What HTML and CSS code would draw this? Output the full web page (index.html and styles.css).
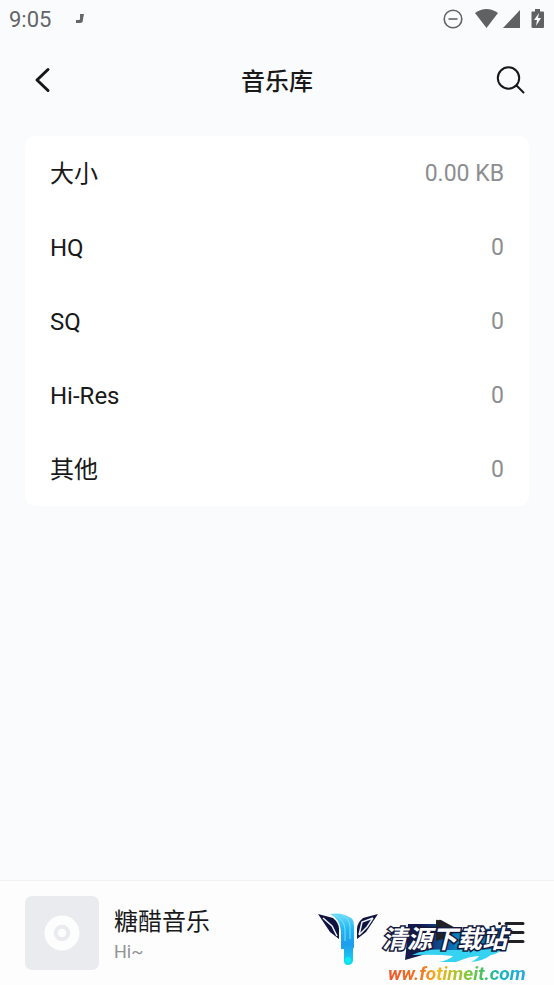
FILE: index.html
```html
<!DOCTYPE html>
<html lang="zh-CN">
<head>
<meta charset="utf-8">
<meta name="viewport" content="width=device-width, initial-scale=1">
<title>音乐库</title>
<link rel="stylesheet" href="styles.css">
</head>
<body>
<div class="status">
  <time class="clock">9:05</time>
  <svg class="note" width="10" height="12" viewBox="0 0 10 12"><path d="M5 1h4l-1 5c0 3-1 4-3 4H1V7h3c1 0 1-1 1-2z" fill="#66676a"/></svg>
  <svg class="signals" width="104" height="22" viewBox="0 0 104 22">
    <g fill="none" stroke="#626366" stroke-width="1.6"><circle cx="11" cy="11" r="8.800"/><path d="M6.500 11h9"/></g>
    <path d="M33 5Q44.500-3 56 5L44.500 20z" fill="#606163"/>
    <path d="M78 2v18H61z" fill="#606163"/>
    <path d="M90 3.500h3V1h5v2.500h3q1 0 1 1v14q0 1.500-1 1.500H91q-1.500 0-1.500-1.500V4z" fill="#606163"/>
    <path d="M97 5l-5 7h3l-1 6 5-8h-3z" fill="#fafbfd"/>
  </svg>
</div>
<header class="bar">
  <button class="icon" type="button" aria-label="返回"><svg width="36" height="36" viewBox="0 0 36 36"><path d="M23 7.500 12 18l11 10.500" fill="none" stroke="#171717" stroke-width="3" stroke-linecap="round" stroke-linejoin="round"/></svg></button>
  <h1>音乐库</h1>
  <button class="icon" type="button" aria-label="搜索"><svg width="36" height="36" viewBox="0 0 36 36"><g fill="none" stroke="#171717" stroke-width="2" stroke-linecap="round"><circle cx="15.500" cy="16" r="10.700"/><path d="m23.500 23.500 7 7"/></g></svg></button>
</header>
<main>
  <dl class="card">
    <div class="row"><dt>大小</dt><dd>0.00 KB</dd></div>
    <div class="row"><dt>HQ</dt><dd>0</dd></div>
    <div class="row"><dt>SQ</dt><dd>0</dd></div>
    <div class="row"><dt>Hi-Res</dt><dd>0</dd></div>
    <div class="row"><dt>其他</dt><dd>0</dd></div>
  </dl>
</main>
<footer class="player">
  <svg class="cover" width="74" height="74" viewBox="0 0 74 74"><rect width="74" height="74" rx="7" fill="#e9ebee"/><circle cx="37" cy="37" r="17.500" fill="#fdfdfe"/><circle cx="37" cy="37" r="6.300" fill="none" stroke="#e9ebee" stroke-width="4"/></svg>
  <div class="track"><strong>糖醋音乐</strong><span>Hi~</span></div>
  <button class="icon" type="button" aria-label="播放"><svg width="36" height="36" viewBox="0 0 36 36"><path d="M5 7q0-3 3-2l20 11q3 2 0 4L8 31q-3 1-3-2z" fill="#202124"/></svg></button>
  <button class="icon" type="button" aria-label="播放列表"><svg width="36" height="36" viewBox="0 0 36 36"><g stroke="#202124" stroke-width="3" stroke-linecap="round"><path d="M13 8.500h17M13 17.500h17M13 26.500h17M6.500 8.500h.1M6.500 17.500h.1M6.500 26.500h.1"/></g></svg></button>
  <div class="watermark">
    <svg class="emblem" width="60" height="56" viewBox="0 0 60 56">
      <defs><linearGradient id="flow" x1="0" y1="0" x2="0" y2="1"><stop offset="0" stop-color="#6fdcf8"/><stop offset=".3" stop-color="#22b8f2"/><stop offset=".6" stop-color="#1e9cee"/><stop offset="1" stop-color="#19dcee"/></linearGradient></defs>
      <path d="M0 3 15 7q6 5 6 11v10l-9-7z" fill="#11133f"/><path d="m5 7 9 8 5 10" fill="none" stroke="#e9f4fb" stroke-width="1.500"/>
      <path d="M60 3 45 7q-6 5-6 11v10l9-7z" fill="#11133f"/><path d="M55 7 44 11l-3 13M55 7 49 16l-8 8" fill="none" stroke="#e9f4fb" stroke-width="1.500"/>
      <path d="M12 3Q24 1 31 6q5 1 5 9v21q0 1-1 2v12q-1 4-5 4-4 0-4-4V38h-3V20Q22 8 12 3z" fill="url(#flow)"/>
      <path d="M15 4q11 3 12 14v12M24 4q7 3 8 11v13" fill="none" stroke="#7fdff8"/>
      <circle cx="30" cy="49" r="3" fill="#0cecf0"/>
    </svg>
    <svg class="swoosh" width="146" height="42" viewBox="0 0 146 42">
      <defs><linearGradient id="wave"><stop offset=".15" stop-color="#151a4e"/><stop offset=".4" stop-color="#0a5fa8"/><stop offset=".6" stop-color="#08acd9"/><stop offset="1" stop-color="#16265c"/></linearGradient></defs>
      <path d="M30 1h28v6h30l35-2h10l-5 21-30 5H48L27 37l1-9z" fill="url(#wave)"/>
      <path d="M58 7V-2q0-2 2-1l18 9-6 8-14 4z" fill="#202124"/>
      <path d="M34 32q16-7 33-5h35l25-2q-8 6-14 7-8 6-20 7 6-3 8-6-9 0-23 6H61q10-2 14-6-16-2-41-1z" fill="#35d2f1"/>
    </svg>
    <span class="brand">清源下载站</span>
    <span class="site">ww.fotimeit.com</span>
  </div>
</footer>
</body>
</html>
```
FILE: styles.css
```css
* { box-sizing: border-box; }
body {
  margin: 0;
  min-height: 100vh;
  display: flex;
  flex-direction: column;
  background: #fafbfd;
  color: #191919;
  font-family: Roboto, "Noto Sans CJK SC", sans-serif;
}
svg { display: block; }
.status {
  display: flex;
  align-items: center;
  height: 38px;
  padding: 0 8px 0 9px;
}
.clock { font-size: 22px; color: #646568; }
.note { margin-left: 24px; }
.signals { margin-left: auto; }
.bar {
  display: flex;
  align-items: center;
  justify-content: space-between;
  height: 84px;
  padding: 0 25px;
}
h1 { margin: 0; padding-top: 3px; font-size: 24px; font-weight: 500; line-height: 32px; }
.icon { padding: 0; border: 0; background: none; }
main { flex: 1; padding: 14px 25px; }
.card { margin: 0; background: #fff; border-radius: 10px; }
.row {
  display: flex;
  align-items: center;
  justify-content: space-between;
  height: 74px;
  padding: 2px 25px 0;
  font-size: 24px;
  line-height: 28px;
}
dt, dd { margin: 0; }
dd { font-size: 23px; color: #8d8e90; }
.player {
  position: relative;
  display: flex;
  align-items: center;
  gap: 24px;
  height: 105px;
  padding: 0 25px;
  background: #fdfdfe;
  border-top: 1px solid #f0f1f4;
}
.cover { margin-right: -9px; }
.track { flex: 1; display: flex; flex-direction: column; gap: 2px; padding-top: 3px; }
.track strong { font-size: 24px; font-weight: 400; line-height: 32px; }
.track span { font-size: 18px; line-height: 24px; color: #929395; }
.watermark {
  position: absolute;
  right: 20px;
  bottom: 0;
  width: 216px;
  height: 74px;
  pointer-events: none;
}
.emblem { position: absolute; left: 0; top: 0; }
.swoosh { position: absolute; left: 60px; top: 12px; overflow: visible; }
.brand {
  position: absolute;
  left: 64px;
  top: 8px;
  font: italic 700 25px/36px "Noto Sans CJK SC", sans-serif;
  color: #fff;
  white-space: nowrap;
  -webkit-text-stroke: 3px #13193d;
  paint-order: stroke fill;
}
.site {
  position: absolute;
  left: 70px;
  top: 51px;
  padding-right: 4px;
  font: italic 700 19px/24px Roboto, sans-serif;
  white-space: nowrap;
  color: transparent;
  background: linear-gradient(90deg, #ef5328, #f47a20 25%, #f5b51c 35%, #8ac936 55%, #30bd70 70%, #14b5bf 80%, #25a5e5);
  background-clip: text;
}
```
